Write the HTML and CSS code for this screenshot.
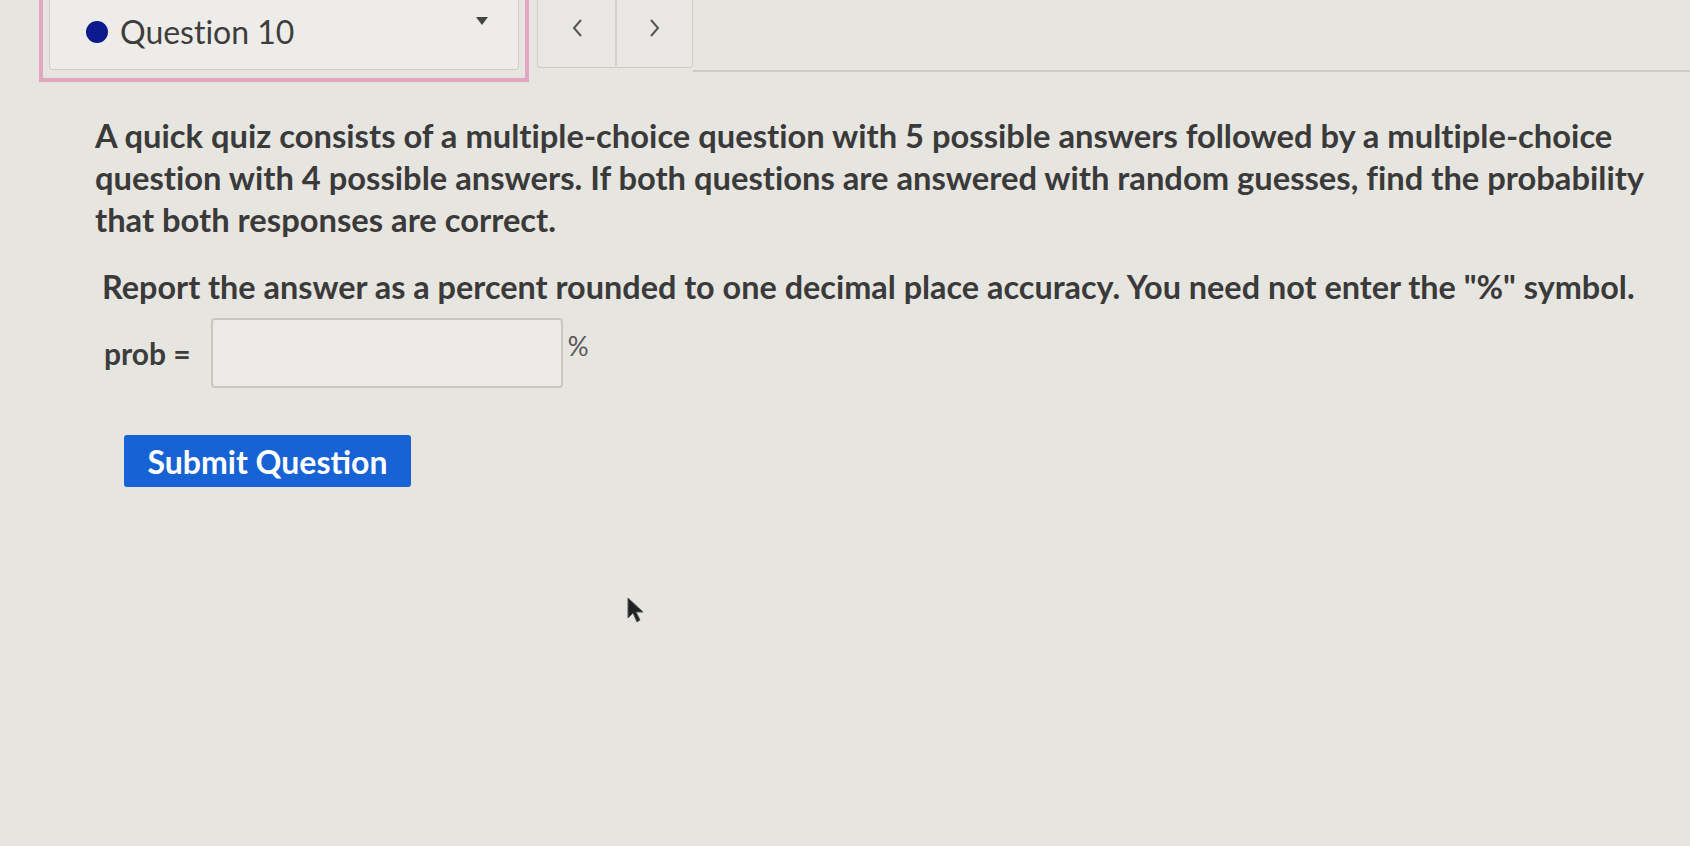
FILE: index.html
```html
<!DOCTYPE html>
<html lang="en">
<head>
<meta charset="utf-8">
<title>Question 10</title>
<link rel="stylesheet" href="styles.css">
</head>
<body>
<div class="page">
  <header class="topbar">
    <div class="qselect-wrap">
      <div class="qselect">
        <span class="dot"></span>
        <span class="qlabel">Question 10</span>
        <span class="caret"></span>
      </div>
    </div>
    <div class="nav">
      <button class="navbtn" aria-label="Previous">
        <svg width="14" height="22" viewBox="0 0 14 22"><path d="M11 3 L4 11 L11 19" fill="none" stroke="#555" stroke-width="2"/></svg>
      </button>
      <button class="navbtn" aria-label="Next">
        <svg width="14" height="22" viewBox="0 0 14 22"><path d="M3 3 L10 11 L3 19" fill="none" stroke="#555" stroke-width="2"/></svg>
      </button>
    </div>
    <div class="rule"></div>
  </header>

  <main class="question">
    <p class="stem">A quick quiz consists of a multiple-choice question with 5 possible answers followed by a multiple-choice question with 4 possible answers. If both questions are answered with random guesses, find the probability that both responses are correct.</p>
    <p class="report">Report the answer as a percent rounded to one decimal place accuracy. You need not enter the "%" symbol.</p>
    <div class="answer">
      <span class="prob">prob =</span>
      <input class="field" type="text" aria-label="prob">
      <span class="pct">%</span>
    </div>
    <button class="submit">Submit Question</button>
  </main>

  <svg class="cursor" width="22" height="30" viewBox="0 0 22 30"><path d="M2 2 L2 22 L7 17 L11 26 L14 24 L10 16 L17 16 Z" fill="#1e2426" stroke="#555" stroke-width="1"/></svg>
</div>
</body>
</html>
```
FILE: styles.css
```css
html, body {
  margin: 0;
  padding: 0;
}
body {
  background: #e7e5e0;
  font-family: Lato, "Open Sans", sans-serif;
  font-variant-ligatures: none;
  color: #353535;
  width: 1690px;
  height: 846px;
  overflow: hidden;
}
.page {
  position: relative;
  height: 846px;
}
.topbar {
  display: flex;
  align-items: flex-start;
  padding-left: 39px;
}
.qselect-wrap {
  width: 470px;
  height: 78px;
  border: 4px solid #e2a6c0;
  border-top: none;
  padding: 0 6px 0 6px;
  box-sizing: content-box;
}
.qselect {
  height: 70px;
  box-sizing: border-box;
  background: #eeece8;
  border: 1px solid #cfcdc9;
  border-top: none;
  border-radius: 0 0 4px 4px;
  display: flex;
  align-items: center;
  padding: 0 30px 6px 36px;
}
.dot {
  width: 22px;
  height: 22px;
  border-radius: 50%;
  background: #0b1a8c;
  margin-right: 12px;
}
.qlabel {
  font-size: 32px;
  color: #3d3d3d;
  flex: 1;
}
.caret {
  width: 0;
  height: 0;
  border-left: 6px solid transparent;
  border-right: 6px solid transparent;
  border-top: 8px solid #444;
  margin-bottom: 22px;
}
.nav {
  display: flex;
  margin-left: 8px;
  height: 67px;
  border: 1px solid #cfcdc9;
  border-top: none;
  border-radius: 0 0 4px 4px;
  background: #e9e7e3;
}
.navbtn {
  width: 77px;
  height: 66px;
  border: none;
  background: transparent;
  padding: 0 0 10px;
  display: flex;
  align-items: center;
  justify-content: center;
}
.navbtn + .navbtn {
  border-left: 2px solid #d2d0cc;
}
.rule {
  flex: 1;
  height: 70px;
  border-bottom: 2px solid #cdcbc6;
}
.question {
  padding: 33px 0 0 95px;
  width: 1572px;
}
.stem {
  margin: 0;
  font-size: 32.7px;
  line-height: 42px;
  font-weight: bold;
  color: #3a3a3a;
}
.report {
  margin: 25px 0 0 7px;
  font-size: 32.4px;
  line-height: 42px;
  font-weight: bold;
  color: #3a3a3a;
}
.answer {
  display: flex;
  align-items: center;
  margin: 10px 0 0 9px;
}
.prob {
  font-size: 30px;
  font-weight: bold;
  color: #3d3d3d;
  margin-right: 20px;
}
.field {
  width: 352px;
  height: 70px;
  box-sizing: border-box;
  border: 2px solid #c9c7c3;
  border-radius: 4px;
  background: #eceae6;
  margin: 0;
}
.pct {
  font-size: 26px;
  color: #555;
  margin-left: 5px;
  align-self: flex-start;
  margin-top: 12px;
}
.submit {
  display: block;
  margin: 47px 0 0 29px;
  width: 287px;
  height: 52px;
  border: none;
  border-radius: 3px;
  background: #1762d4;
  color: #ffffff;
  font-family: Lato, "Open Sans", sans-serif;
  font-size: 32px;
  font-weight: bold;
  padding: 0;
}
.cursor {
  position: absolute;
  left: 626px;
  top: 596px;
}
```
